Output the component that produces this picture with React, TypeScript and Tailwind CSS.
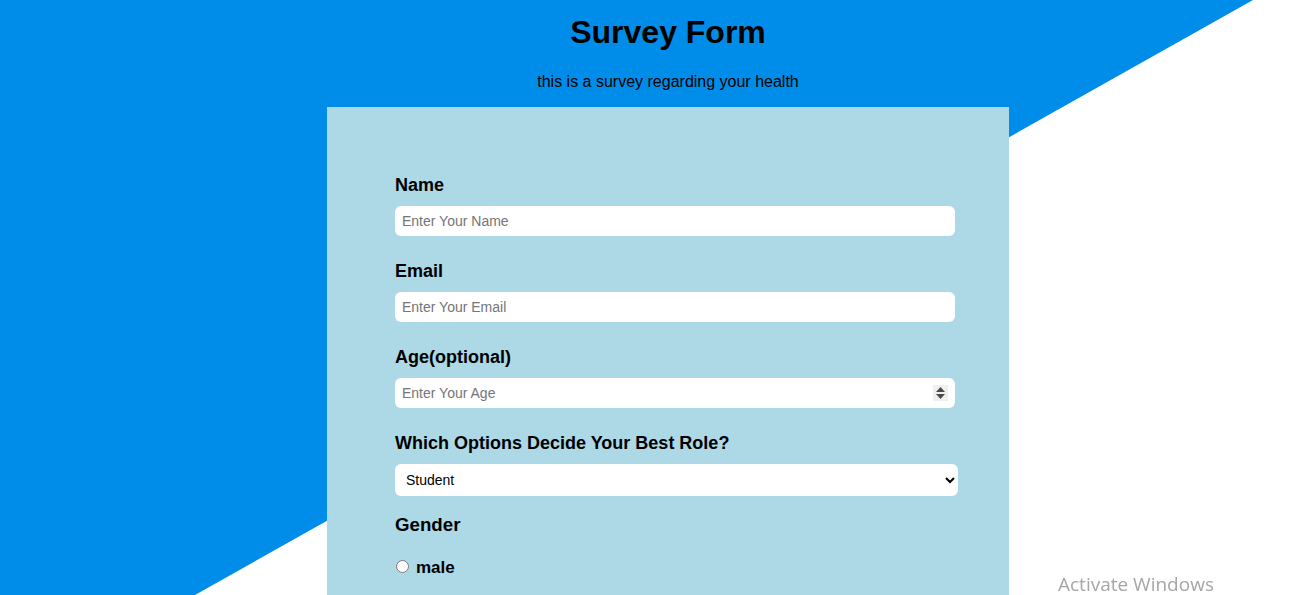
export default function App() {
  return (
    <div className="relative min-h-screen overflow-hidden bg-white font-['Liberation_Sans',Arial,sans-serif] text-black">
      {/* blue diagonal backdrop */}
      <div className="absolute inset-x-0 top-0 h-[595px] bg-[#008de9] [clip-path:polygon(0_0,1253px_0,195px_595px,0_595px)]" />

      <div className="relative flex flex-col items-center pl-[28px]">
        <h1 className="mt-[14px] text-[32px] font-bold leading-[37px]">Survey Form</h1>
        <p className="mt-[22px] text-[16px] leading-[18px]">this is a survey regarding your health</p>

        <form className="mt-[16px] w-[682px] bg-[#add8e6] pl-[68px] pt-[68px] pb-[40px]">
          <label className="block text-[18px] font-bold leading-[21px]">Name</label>
          <input
            type="text"
            placeholder="Enter Your Name"
            className="mt-[10px] block h-[30px] w-[560px] rounded-[6px] bg-white pl-[7px] text-[14px] outline-none placeholder:text-[#757575]"
          />

          <label className="mt-[25px] block text-[18px] font-bold leading-[21px]">Email</label>
          <input
            type="email"
            placeholder="Enter Your Email"
            className="mt-[10px] block h-[30px] w-[560px] rounded-[6px] bg-white pl-[7px] text-[14px] outline-none placeholder:text-[#757575]"
          />

          <label className="mt-[25px] block text-[18px] font-bold leading-[21px]">Age(optional)</label>
          <div className="relative mt-[10px] w-[560px]">
            <input
              type="number"
              placeholder="Enter Your Age"
              className="block h-[30px] w-full rounded-[6px] bg-white pl-[7px] pr-[28px] text-[14px] outline-none placeholder:text-[#757575] [&::-webkit-inner-spin-button]:appearance-none"
            />
            <span className="pointer-events-none absolute right-[7px] top-[7px] flex h-[16px] w-[15px] flex-col items-center justify-center gap-[2px] bg-[#efefef]">
              <svg width="9" height="5" viewBox="0 0 9 5"><path d="M4.5 0L9 5H0z" fill="#4a4a4a" /></svg>
              <svg width="9" height="5" viewBox="0 0 9 5"><path d="M0 0h9L4.5 5z" fill="#4a4a4a" /></svg>
            </span>
          </div>

          <label className="mt-[25px] block text-[18px] font-bold leading-[21px]">
            Which Options Decide Your Best Role?
          </label>
          <select
            defaultValue="student"
            className="mt-[10px] block h-[32px] w-[563px] rounded-[6px] bg-white pl-[7px] pr-[6px] text-[14px] outline-none"
          >
            <option value="student">Student</option>
            <option value="job">Full Time Job</option>
            <option value="learner">Full Time Learner</option>
            <option value="other">Other</option>
          </select>

          <h3 className="mt-[18px] text-[18.72px] font-bold leading-[22px]">Gender</h3>

          <label className="mt-[22px] flex items-center text-[17px] font-bold leading-[20px]">
            <input type="radio" name="gender" className="mb-[3px] ml-[1px] mr-[7px] h-[13px] w-[13px]" />
            male
          </label>
          <label className="mt-[18px] flex items-center text-[17px] font-bold leading-[20px]">
            <input type="radio" name="gender" className="mb-[3px] ml-[1px] mr-[7px] h-[13px] w-[13px]" />
            female
          </label>
        </form>
      </div>

      <div className="fixed left-[1058px] top-[570px] text-[19px] text-[#a6a6a6] font-['Open_Sans','Noto_Sans',sans-serif]">
        Activate Windows
      </div>
    </div>
  );
}
